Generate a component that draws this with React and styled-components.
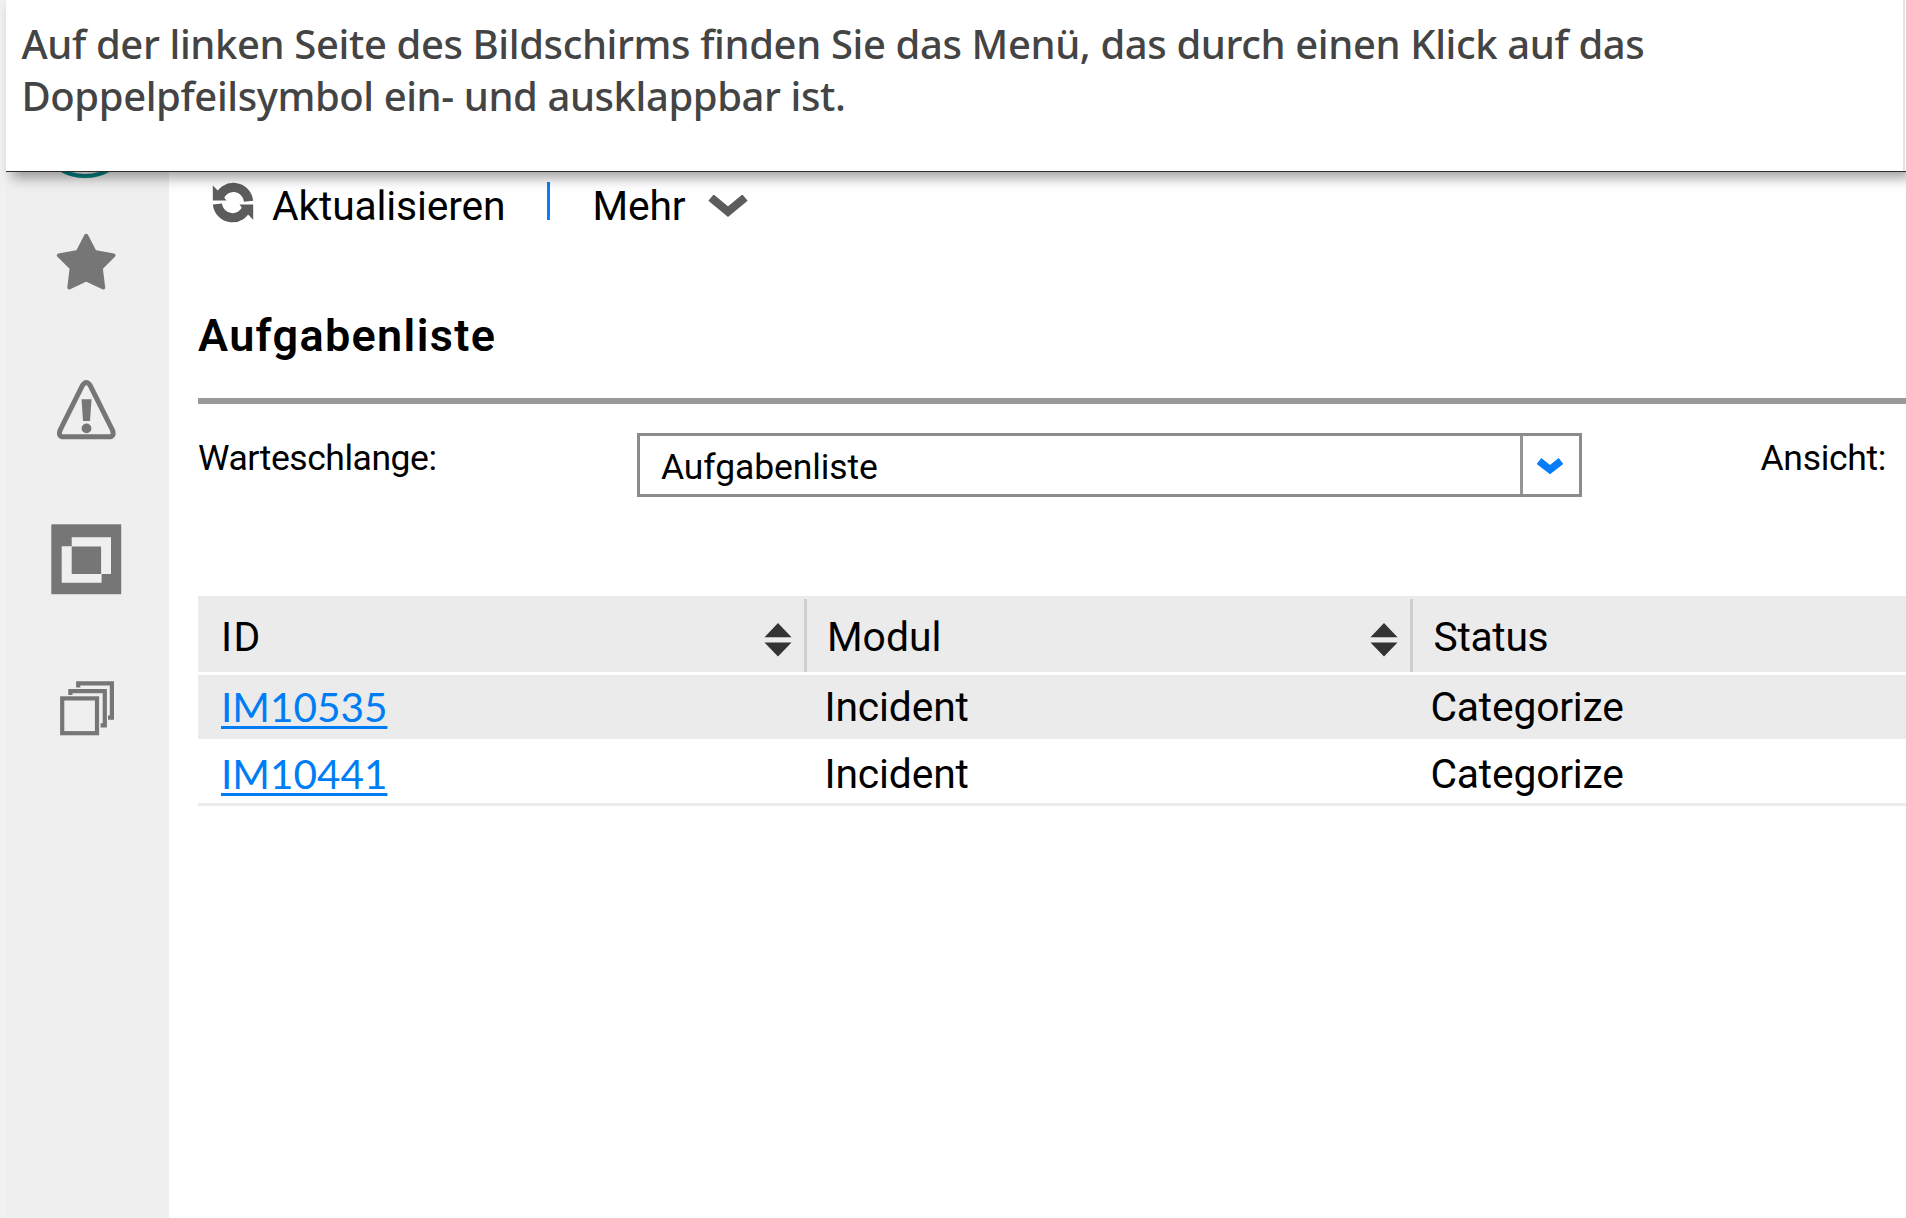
import React from 'react';
import styled, { createGlobalStyle } from 'styled-components';

const GlobalStyle = createGlobalStyle`
  *, *::before, *::after { box-sizing: border-box; }
  body { margin: 0; background: #fff; }
  svg { display: block; flex: none; }
`;

const Page = styled.div`
  display: flex;
  flex-direction: column;
  width: 1906px;
  height: 1218px;
  overflow: hidden;
  background: linear-gradient(to right, #f1f1f1 6px, #fff 6px);
  font-family: Roboto, 'Liberation Sans', sans-serif;
  font-size: 40.8px;
  color: #000;
`;

const Banner = styled.header`
  position: relative;
  z-index: 1;
  flex: none;
  height: 172px;
  margin-left: 6px;
  padding: 18px 0 0 15.5px;
  background: linear-gradient(to left, #fff 1px, #e4e4e4 1px, #e4e4e4 3px, #fff 3px);
  border-bottom: 1px solid #2d2d2d;
  box-shadow: 6px 6px 12px rgba(0, 0, 0, 0.37);
`;

const BannerText = styled.p`
  margin: 0;
  font-family: 'Noto Sans', 'Open Sans', sans-serif;
  font-size: 40px;
  font-weight: 500;
  line-height: 51.7px;
  letter-spacing: ${(p) => p.$spacing || '0'};
  white-space: nowrap;
  color: #444;
`;

const Body = styled.div`
  display: flex;
  flex: 1;
  min-height: 0;
  padding-left: 6px;
`;

const Sidebar = styled.nav`
  display: flex;
  flex-direction: column;
  align-items: center;
  flex: none;
  width: 163px;
  padding-right: 2px;
  background: #efefef;
`;

const AvatarSlot = styled.div`
  height: 15px;
`;

const NavItem = styled.div`
  display: flex;
  align-items: center;
  height: 149px;
  color: #767676;
`;

const Main = styled.main`
  display: flex;
  flex-direction: column;
  flex: 1;
  min-width: 0;
  padding: 10px 0 0 29px;
`;

const Toolbar = styled.div`
  display: flex;
  height: 48px;
  padding-left: 14px;
  line-height: 48px;
`;

const ToolLabel = styled.span`
  width: ${(p) => p.$width};
  margin-left: ${(p) => p.$gap};
  letter-spacing: -0.15px;
  white-space: nowrap;
`;

const ToolDivider = styled.span`
  width: 3px;
  height: 38px;
  margin: 0 0 0 40px;
  background: #0a7dfa;
`;

const ToolArrow = styled.span`
  padding: 13px 0 0 22.5px;
`;

const Heading = styled.h1`
  margin: 76px 0 0;
  padding-bottom: 32px;
  border-bottom: 6px solid #999;
  font-size: 45px;
  font-weight: 600;
  line-height: 60px;
  letter-spacing: 1.35px;
`;

const FilterRow = styled.div`
  display: flex;
  height: 64px;
  margin-top: 29px;
  font-size: 35.5px;
`;

const FilterLabel = styled.label`
  flex: none;
  width: ${(p) => p.$width};
  line-height: 51px;
  letter-spacing: ${(p) => p.$spacing || '0'};
  white-space: nowrap;
`;

const Select = styled.div`
  display: flex;
  flex: none;
  width: 944.5px;
  margin-right: 179px;
  border: 3px solid #8b8b8b;
`;

const SelectValue = styled.span`
  flex: 1;
  padding-left: 21px;
  line-height: 63px;
  letter-spacing: -0.1px;
`;

const SelectArrow = styled.span`
  display: flex;
  align-items: center;
  width: 59px;
  padding: 1px 0 0 13.5px;
  border-left: 3px solid #959595;
`;

const Table = styled.div`
  margin-top: 99px;
`;

const columns = '608.5px 606px 1fr';

const HeadRow = styled.div`
  display: grid;
  grid-template-columns: ${columns};
  height: 79px;
  background: #ebebeb;
  border-bottom: 3px solid #fff;
`;

const HeadCell = styled.div`
  display: flex;
  justify-content: space-between;
  height: 73px;
  margin-top: 3px;
  padding: 0 12px 0 ${(p) => p.$indent};
  border-right: ${(p) => (p.$last ? '0' : '3px solid #cfcfcf')};
  line-height: 76px;
  letter-spacing: ${(p) => p.$spacing || '0'};
`;

const SortSlot = styled.span`
  padding-top: 23px;
`;

const Row = styled.div`
  display: grid;
  grid-template-columns: ${columns};
  height: ${(p) => p.$height};
  background: ${(p) => (p.$shaded ? '#ebebeb' : '#fff')};
  border-bottom: 3px solid ${(p) => (p.$shaded ? '#fff' : '#ececec')};
  line-height: 64px;
`;

const Cell = styled.div`
  padding-left: ${(p) => p.$indent};
  letter-spacing: ${(p) => p.$spacing || '0'};
`;

const TicketLink = styled.a`
  font-family: Lato, Roboto, sans-serif;
  font-size: 40.5px;
  color: #007df5;
  text-decoration: underline;
  text-decoration-thickness: 3px;
  text-decoration-skip-ink: none;
  text-underline-offset: 3.5px;
`;

const AvatarRing = () => (
  <svg width="75" height="8" viewBox="0 0 75 8">
    <circle cx="36" cy="-45" r="49" fill="none" stroke="#01807f" strokeWidth="4" />
  </svg>
);

const StarIcon = () => (
  <svg width="75" height="75" viewBox="0 0 75 75">
    <path
      d="M37.2 11.8 L45.6 27.9 L64.5 31.4 L51.8 44 L54.2 63.5 L37.2 55.4 L20.3 63.5 L22.7 44 L9.9 31.4 L28.8 27.9 Z"
      fill="currentColor" stroke="currentColor" strokeWidth="4" strokeLinejoin="round"
    />
  </svg>
);

const WarningIcon = () => (
  <svg width="75" height="75" viewBox="0 0 75 75">
    <path
      d="M33.6 12.2 Q37.3 6.6 41 12.2 L63.4 57 Q66 63.8 60 63.8 H14.6 Q8.6 63.8 11.2 57 Z"
      fill="none" stroke="currentColor" strokeWidth="5" strokeLinejoin="round"
    />
    <path d="M32.5 26.3 H42.5 L41 48 H34 Z" fill="currentColor" />
    <circle cx="37.5" cy="55.4" r="4.9" fill="currentColor" />
  </svg>
);

const OverlapIcon = () => (
  <svg width="75" height="75" viewBox="0 0 75 75">
    <rect x="2.3" y="2.3" width="69.9" height="69.9" fill="currentColor" />
    <path d="M22.7 15.3 H62 V52 H52.6 V60.8 H12.7 V24.2 H22.7 Z" fill="#efefef" />
    <rect x="22.7" y="24.5" width="29.4" height="27.5" fill="currentColor" />
  </svg>
);

const StackIcon = () => (
  <svg width="75" height="75" viewBox="0 0 75 75" fill="none" stroke="currentColor" strokeWidth="4.2">
    <rect x="13.2" y="27.4" width="34.8" height="34.8" />
    <path d="M21.4 24 V20.2 H55.8 V54.4 H51.6" />
    <path d="M29.2 16.4 V12.4 H62.9 V46.6 H59" />
  </svg>
);

const RefreshIcon = () => (
  <svg width="42" height="43" viewBox="0 0 42 43">
    <g id="half">
      <path d="M7 16 A15.2 15.2 0 0 1 36.6 19.2" fill="none" stroke="#5c5c5c" strokeWidth="9.2" />
      <path d="M0.8 3.5 V18.6 H14.5 L10.5 13.5 Z" fill="#5c5c5c" />
    </g>
    <use href="#half" transform="rotate(180 21 20.6)" />
  </svg>
);

const MoreIcon = () => (
  <svg width="40" height="22" viewBox="0 0 40 22">
    <path d="M3 2.6 L20 16.6 L37 2.6" fill="none" stroke="#5c5c5c" strokeWidth="8.2" />
  </svg>
);

const SelectIcon = () => (
  <svg width="28" height="18" viewBox="0 0 28 18">
    <path d="M3 4 L14 12.6 L25 4" fill="none" stroke="#067df7" strokeWidth="7.4" />
  </svg>
);

const SortIcon = () => (
  <svg width="28" height="36" viewBox="0 0 28 36">
    <path d="M14 1 L27.5 15.2 H0.5 Z M14 34.6 L27.5 20.4 H0.5 Z" fill="#333" />
  </svg>
);

const navIcons = [StarIcon, WarningIcon, OverlapIcon, StackIcon];
const tickets = [
  { id: 'IM10535', module: 'Incident', status: 'Categorize' },
  { id: 'IM10441', module: 'Incident', status: 'Categorize' },
];

export default function App() {
  return (
    <>
      <GlobalStyle />
      <Page>
        <Banner>
          <BannerText $spacing="-0.38px">
            Auf der linken Seite des Bildschirms finden Sie das Menü, das durch einen Klick auf das
          </BannerText>
          <BannerText $spacing="-0.41px">Doppelpfeilsymbol ein- und ausklappbar ist.</BannerText>
        </Banner>
        <Body>
          <Sidebar>
            <AvatarSlot><AvatarRing /></AvatarSlot>
            {navIcons.map((Icon, i) => (
              <NavItem key={i}><Icon /></NavItem>
            ))}
          </Sidebar>
          <Main>
            <Toolbar>
              <RefreshIcon />
              <ToolLabel $width="235px" $gap="18px">Aktualisieren</ToolLabel>
              <ToolDivider />
              <ToolLabel $width="93px" $gap="42.5px">Mehr</ToolLabel>
              <ToolArrow><MoreIcon /></ToolArrow>
            </Toolbar>
            <Heading>Aufgabenliste</Heading>
            <FilterRow>
              <FilterLabel $width="439px" $spacing="-0.45px">Warteschlange:</FilterLabel>
              <Select>
                <SelectValue>Aufgabenliste</SelectValue>
                <SelectArrow><SelectIcon /></SelectArrow>
              </Select>
              <FilterLabel $width="140px" $spacing="-0.3px">Ansicht:</FilterLabel>
            </FilterRow>
            <Table>
              <HeadRow>
                <HeadCell $indent="23px" $spacing="1.5px">ID<SortSlot><SortIcon /></SortSlot></HeadCell>
                <HeadCell $indent="20.5px">Modul<SortSlot><SortIcon /></SortSlot></HeadCell>
                <HeadCell $indent="21px" $spacing="-0.3px" $last>Status</HeadCell>
              </HeadRow>
              {tickets.map((t, i) => (
                <Row key={t.id} $shaded={i % 2 === 0} $height={i === 0 ? '67px' : '64px'}>
                  <Cell $indent="23px"><TicketLink>{t.id}</TicketLink></Cell>
                  <Cell $indent="18px" $spacing="-0.15px">{t.module}</Cell>
                  <Cell $indent="18px" $spacing="-0.2px">{t.status}</Cell>
                </Row>
              ))}
            </Table>
          </Main>
        </Body>
      </Page>
    </>
  );
}
